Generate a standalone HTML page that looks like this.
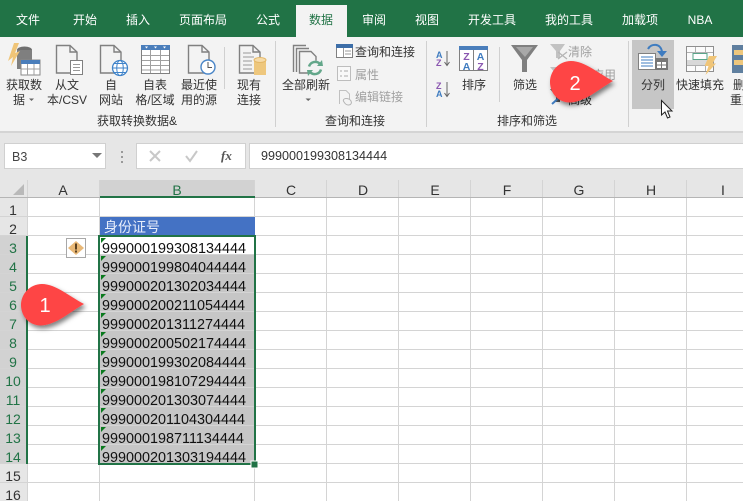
<!DOCTYPE html>
<html><head><meta charset="utf-8"><style>
html,body{margin:0;padding:0;width:743px;height:501px;overflow:hidden;background:#fff}
svg{display:block}
text{font-family:"Liberation Sans","Noto Sans CJK SC",sans-serif}
.t{font-size:12px;fill:#fff;text-anchor:middle}
.r{font-size:12px;fill:#333;text-anchor:middle}
.l{font-size:12px;fill:#333}
.d{font-size:12px;fill:#a0a0a0}
.c{font-size:14.4px;fill:#111}
.h{font-size:14px;fill:#333;text-anchor:middle}
.g{fill:none;stroke:#808080;stroke-width:1.4}
</style></head><body>
<svg width="743" height="501" viewBox="0 0 743 501" xmlns="http://www.w3.org/2000/svg">
<defs>
<filter id="sh" x="-30%" y="-30%" width="170%" height="170%"><feDropShadow dx="2" dy="3" stdDeviation="2.500" flood-color="#000" flood-opacity=".5"/></filter>
</defs>
<!-- tabs -->
<rect width="743" height="37" fill="#217346"/>
<rect x="296" y="5" width="51" height="32" fill="#f3f3f3"/>
<text class="t" x="28" y="24">文件</text><text class="t" x="85" y="24">开始</text><text class="t" x="138" y="24">插入</text><text class="t" x="203" y="24">页面布局</text><text class="t" x="268" y="24">公式</text>
<text class="t" x="321" y="24" style="fill:#217346">数据</text>
<text class="t" x="374" y="24">审阅</text><text class="t" x="427" y="24">视图</text><text class="t" x="492" y="24">开发工具</text><text class="t" x="569" y="24">我的工具</text><text class="t" x="640" y="24">加载项</text><text class="t" x="700" y="24">NBA</text>
<!-- ribbon -->
<rect y="37" width="743" height="94" fill="#f3f3f3"/>
<rect y="131" width="743" height="2" fill="#d4d4d4"/>
<rect y="133" width="743" height="47" fill="#e6e6e6"/>
<g fill="#d0d0d0"><rect x="275" y="41" width="1" height="86"/><rect x="426" y="41" width="1" height="86"/><rect x="628" y="41" width="1" height="86"/><rect x="224" y="47" width="1" height="42"/><rect x="499" y="47" width="1" height="55"/></g>
<rect x="632" y="40" width="42" height="69" fill="#c6c6c6"/>

<!-- get data icon -->
<ellipse cx="24.500" cy="50" rx="7.500" ry="3.500" fill="#6f6f6f"/><rect x="17" y="50" width="15" height="19" fill="#7f7f7f"/>
<polygon points="14,43 8,61 13,57 11,66 20,51 15,53 19,43" fill="#f0c578"/>
<rect x="21" y="60" width="19" height="15" fill="#fff" stroke="#8a8a8a"/><rect x="21" y="60" width="19" height="4" fill="#4a7ebb"/>
<path d="M21.500 69H40M27.500 64V75M34 64V75" stroke="#a0a0a0" fill="none"/>
<!-- from text -->
<path class="g" d="M56.500 45.500H70L77 52V73H56.500Z"/><path class="g" d="M70 45.500V52H77"/>
<rect x="70.500" y="60.500" width="12" height="14" fill="#fff" stroke="#808080"/><path d="M73 64.500H80M73 67.500H80M73 70.500H80" stroke="#999"/>
<!-- web -->
<path class="g" d="M100.500 45.500H114L121 52V73H100.500Z"/><path class="g" d="M114 45.500V52H121"/>
<circle cx="120" cy="68" r="7.500" fill="#fff" stroke="#3f83c9" stroke-width="1.300"/><ellipse cx="120" cy="68" rx="3.300" ry="7.500" fill="none" stroke="#3f83c9"/><path d="M112.500 68H127.500M114 63.500H126M114 72.500H126" stroke="#3f83c9"/>
<!-- table -->
<rect x="141.500" y="45.500" width="28" height="28" fill="#fff" stroke="#808080"/><rect x="141" y="45" width="29" height="5" fill="#4a7ebb"/>
<path d="M145 46.500H148L146.500 48.500ZM154 46.500H157L155.500 48.500ZM163 46.500H166L164.500 48.500Z" fill="#fff"/>
<path d="M142 55.500H169M142 60.500H169M142 65.500H169M142 70H169M150.500 50V73M160.500 50V73" stroke="#a0a0a0" fill="none"/>
<!-- recent -->
<path class="g" d="M188.500 45.500H202L209 52V73H188.500Z"/><path class="g" d="M202 45.500V52H209"/>
<circle cx="208" cy="67" r="7" fill="#fff" stroke="#4a86c8" stroke-width="1.400"/><path d="M208 62V67.500H212" stroke="#555" fill="none"/>
<!-- existing -->
<path class="g" d="M239.500 45.500H253L260 52V73H239.500Z"/><path class="g" d="M253 45.500V52H260"/><path d="M243 53H251M243 57H254M243 61H252M243 65H252M243 69H252" stroke="#999"/>
<rect x="254" y="60" width="12" height="15" fill="#eec77d"/><ellipse cx="260" cy="60" rx="6" ry="2.500" fill="#f6dba8" stroke="#e3b767"/>
<!-- refresh all -->
<path class="g" d="M293.500 72V45.500H306M296.500 72V48.500H309"/><path class="g" d="M299.500 51.500H311L316 56.500V73H299.500Z" fill="#f3f3f3"/>
<circle cx="315" cy="68" r="7.500" fill="#f3f3f3"/><path d="M309 66.500A6.500 6.500 0 0 1 320 64M321 69.500A6.500 6.500 0 0 1 310 72" fill="none" stroke="#63a78a" stroke-width="2.500"/><polygon points="317,66 323,66 322,60" fill="#63a78a"/><polygon points="307,70 313,70 308,76" fill="#63a78a"/>
<!-- small -->
<rect x="336.500" y="44.500" width="16" height="13" fill="#fff" stroke="#808080"/><rect x="336" y="44" width="17" height="4" fill="#3d6ea8"/><path d="M343.500 48V57M345 51H351M345 54H351" stroke="#999" fill="none"/>
<rect x="337.500" y="66.500" width="13" height="14" fill="#f8f8f8" stroke="#bdbdbd"/><path d="M340 71H342M344 71H348M340 76H342M344 76H348" stroke="#aaa"/>
<path d="M339.500 104V90.500H346L349.500 94V99" fill="none" stroke="#c0c0c0"/><path d="M344 102C341 98 349 97 351 101C353 105 347 107 344 102Z" fill="none" stroke="#b5b5b5"/>
<text class="l" x="355" y="56">查询和连接</text><text class="d" x="355" y="79">属性</text><text class="d" x="355" y="101">编辑链接</text>
<!-- sort -->
<text x="436" y="58" style="font-size:9px;font-weight:bold;fill:#3f7cc0">A</text><text x="436" y="66" style="font-size:9px;font-weight:bold;fill:#8a56b0">Z</text><text x="436" y="89" style="font-size:9px;font-weight:bold;fill:#8a56b0">Z</text><text x="436" y="97" style="font-size:9px;font-weight:bold;fill:#3f7cc0">A</text>
<path d="M447 51V65M444.500 62L447 65.500L449.500 62M447 82V96M444.500 93L447 96.500L449.500 93" fill="none" stroke="#666"/>
<rect x="459.500" y="46.500" width="28" height="24" fill="#fff" stroke="#808080"/><rect x="459" y="46" width="29" height="4" fill="#4a7ebb"/><path d="M473.500 50V71" stroke="#808080"/>
<text x="466.500" y="60" style="font-size:10.500px;font-weight:bold;fill:#8a56b0;text-anchor:middle">Z</text><text x="466.500" y="70" style="font-size:10.500px;font-weight:bold;fill:#3f7cc0;text-anchor:middle">A</text><text x="480.500" y="60" style="font-size:10.500px;font-weight:bold;fill:#3f7cc0;text-anchor:middle">A</text><text x="480.500" y="70" style="font-size:10.500px;font-weight:bold;fill:#8a56b0;text-anchor:middle">Z</text>
<text class="r" x="474" y="89">排序</text>
<polygon points="511,45 538,45 527,60 527,72 522,72 522,60" fill="#7f7f7f"/><polygon points="516,47 533,47 525,57" fill="#a8a8a8"/>
<text class="r" x="525" y="89">筛选</text>
<polygon points="550,44 565,44 560,51 560,58 556,58 556,51" fill="#c2c2c2"/><path d="M558 52L567 59M567 52L558 59" stroke="#b5b5b5" stroke-width="1.300"/>
<text class="d" x="568" y="56">清除</text><text class="d" x="568" y="79">重新应用</text>
<polygon points="550,67 565,67 560,74 560,80 556,80 556,74" fill="#c2c2c2"/>
<polygon points="550,89 565,89 560,96 560,102 556,102 556,96" fill="#555"/><path d="M552 104L562 95" stroke="#3f7cc0" stroke-width="2"/>
<text class="l" x="568" y="104">高级</text>
<!-- text to columns -->
<rect x="638.500" y="53.500" width="17" height="16" fill="#fff" stroke="#808080"/><path d="M641 57H653M641 60H653M641 63H653M641 66H653" stroke="#3f7cc0"/>
<rect x="655" y="58" width="13" height="12" fill="#777"/><rect x="657" y="62" width="4" height="2.500" fill="#fff"/><rect x="662" y="62" width="4" height="2.500" fill="#fff"/><rect x="657" y="65.500" width="4" height="2.500" fill="#fff"/><rect x="662" y="65.500" width="4" height="2.500" fill="#fff"/>
<path d="M648 49C651 43 661 43 662 52" fill="none" stroke="#3f7cc0" stroke-width="2"/><polygon points="657,51 667,51 662,57" fill="#3f7cc0"/>
<text class="r" x="653" y="89">分列</text>
<!-- flash fill -->
<rect x="686.500" y="46.500" width="27" height="25" fill="#fbfbfb" stroke="#8f8f8f"/><path d="M687 52.500H713M687 65.500H713M695.500 47V71M705.500 47V71" stroke="#b0b0b0"/><rect x="693" y="53.500" width="14" height="6" fill="#fff" stroke="#5aa58a"/><rect x="687" y="60" width="26" height="5" fill="#d8d8d8"/>
<path d="M709 56H717L712.500 63.500H716L705.500 75L708.500 66H704.500Z" fill="#f0c578"/>
<text class="r" x="700" y="89">快速填充</text>
<rect x="732" y="45" width="11" height="28" fill="#5f7f9f"/><rect x="734" y="50" width="9" height="5" fill="#eec77d"/><rect x="734" y="60" width="9" height="5" fill="#eec77d"/>
<text class="l" x="733" y="89">删除</text><text class="l" x="730" y="104">重复</text>
<!-- ribbon labels -->
<text class="r" x="24" y="89">获取数</text><text class="r" x="19" y="104">据</text><path d="M29 98.500H34L31.500 101Z" fill="#666"/>
<text class="r" x="67" y="89">从文</text><text class="r" x="67" y="104">本/CSV</text>
<text class="r" x="111" y="89">自</text><text class="r" x="111" y="104">网站</text>
<text class="r" x="155" y="89">自表</text><text class="r" x="155" y="104">格/区域</text>
<text class="r" x="199" y="89">最近使</text><text class="r" x="199" y="104">用的源</text>
<text class="r" x="249" y="89">现有</text><text class="r" x="249" y="104">连接</text>
<text class="r" x="306" y="89">全部刷新</text><path d="M305.500 98.500H311L308.200 101Z" fill="#666"/>
<text class="r" x="137" y="125">获取转换数据&amp;</text><text class="r" x="355" y="125">查询和连接</text><text class="r" x="527" y="125">排序和筛选</text>
<!-- formula bar -->
<rect x="4.500" y="143.500" width="101" height="25" fill="#fff" stroke="#d0d0d0"/>
<text x="12" y="161" style="font-size:12.500px;fill:#444">B3</text><path d="M92 153H102L97 158Z" fill="#777"/>
<path d="M121 152H123M121 157H123M121 162H123" stroke="#999" stroke-width="2"/>
<rect x="136.500" y="143.500" width="109" height="25" fill="#fff" stroke="#d0d0d0"/>
<path d="M150 151L160 161M160 151L150 161" stroke="#c8c8c8" stroke-width="2"/><path d="M186 156L190 161L197 151" fill="none" stroke="#c8c8c8" stroke-width="2"/>
<text x="221" y="160" style="font-family:'Liberation Serif',serif;font-size:13px;font-style:italic;font-weight:bold;fill:#555">fx</text>
<rect x="249.500" y="143.500" width="494" height="25" fill="#fff" stroke="#d0d0d0"/>
<text x="261" y="160" style="font-size:12.600px;fill:#333">999000199308134444</text>
<!-- grid -->
<rect y="180" width="743" height="321" fill="#fff"/>
<rect y="180" width="743" height="18" fill="#e6e6e6"/>
<rect x="0" y="198" width="27" height="303" fill="#e6e6e6"/>
<rect x="100" y="180" width="155" height="17" fill="#d2d2d2"/>
<rect x="0" y="236" width="27" height="228" fill="#d2d2d2"/>
<polygon points="24,184 24,195 13,195" fill="#b9b9b9"/>
<g stroke="#d4d4d4" fill="none">
<path d="M27.500 180V501M99.500 180V501M254.500 180V501M326.500 180V501M398.500 180V501M470.500 180V501M542.500 180V501M614.500 180V501M686.500 180V501"/>
<path d="M0 216.500H743M0 235.500H743M0 254.500H743M0 273.500H743M0 292.500H743M0 311.500H743M0 330.500H743M0 349.500H743M0 368.500H743M0 387.500H743M0 406.500H743M0 425.500H743M0 444.500H743M0 463.500H743M0 482.500H743"/>
</g>
<rect x="0" y="197" width="743" height="1" fill="#b5b5b5"/>
<text class="h" x="63" y="195">A</text><text class="h" x="177" y="195" style="fill:#217346">B</text><text class="h" x="291" y="195">C</text><text class="h" x="363" y="195">D</text><text class="h" x="435" y="195">E</text><text class="h" x="507" y="195">F</text><text class="h" x="579" y="195">G</text><text class="h" x="651" y="195">H</text><text class="h" x="723" y="195">I</text>
<rect x="100" y="196" width="155" height="2" fill="#217346"/>
<rect x="26" y="236" width="2" height="228" fill="#217346"/>
<text class="h" x="13" y="215">1</text><text class="h" x="13" y="234">2</text>
<text class="h" x="13" y="253" style="fill:#217346">3</text><text class="h" x="13" y="272" style="fill:#217346">4</text><text class="h" x="13" y="291" style="fill:#217346">5</text><text class="h" x="13" y="310" style="fill:#217346">6</text><text class="h" x="13" y="329" style="fill:#217346">7</text><text class="h" x="13" y="348" style="fill:#217346">8</text><text class="h" x="13" y="367" style="fill:#217346">9</text><text class="h" x="13" y="386" style="fill:#217346">10</text><text class="h" x="13" y="405" style="fill:#217346">11</text><text class="h" x="13" y="424" style="fill:#217346">12</text><text class="h" x="13" y="443" style="fill:#217346">13</text><text class="h" x="13" y="462" style="fill:#217346">14</text>
<text class="h" x="13" y="481">15</text><text class="h" x="13" y="500">16</text>
<!-- cells -->
<rect x="100" y="217" width="155" height="19" fill="#4472c4"/>
<text x="104" y="232" style="font-size:14px;fill:#e8eefb">身份证号</text>
<rect x="100" y="255" width="155" height="209" fill="#c6c6c6"/>
<path d="M100 273.500H254M100 292.500H254M100 311.500H254M100 330.500H254M100 349.500H254M100 368.500H254M100 387.500H254M100 406.500H254M100 425.500H254M100 444.500H254" stroke="#d4d4d4"/>
<g fill="#0b7a1e">
<polygon points="101,238 106,238 101,243"/><polygon points="101,256 106,256 101,261"/><polygon points="101,275 106,275 101,280"/><polygon points="101,294 106,294 101,299"/><polygon points="101,313 106,313 101,318"/><polygon points="101,332 106,332 101,337"/><polygon points="101,351 106,351 101,356"/><polygon points="101,370 106,370 101,375"/><polygon points="101,389 106,389 101,394"/><polygon points="101,408 106,408 101,413"/><polygon points="101,427 106,427 101,432"/><polygon points="101,446 106,446 101,451"/>
</g>
<text class="c" x="102" y="253">999000199308134444</text>
<text class="c" x="102" y="272">999000199804044444</text>
<text class="c" x="102" y="291">999000201302034444</text>
<text class="c" x="102" y="310">999000200211054444</text>
<text class="c" x="102" y="329">999000201311274444</text>
<text class="c" x="102" y="348">999000200502174444</text>
<text class="c" x="102" y="367">999000199302084444</text>
<text class="c" x="102" y="386">999000198107294444</text>
<text class="c" x="102" y="405">999000201303074444</text>
<text class="c" x="102" y="424">999000201104304444</text>
<text class="c" x="102" y="443">999000198711134444</text>
<text class="c" x="102" y="462">999000201303194444</text>
<rect x="99" y="236" width="156" height="228" fill="none" stroke="#217346" stroke-width="2"/>
<rect x="251" y="461" width="7" height="7" fill="#217346" stroke="#fff"/>
<!-- warning -->
<rect x="66.500" y="238.500" width="19" height="19" fill="#fff" stroke="#a8a8a8"/>
<polygon points="76,241 84,248 76,255 68,248" fill="#e8b877"/>
<rect x="75" y="243.500" width="2" height="6" fill="#5a4020"/><rect x="75" y="250.500" width="2" height="2" fill="#5a4020"/>
<!-- callouts -->
<path transform="translate(42 305)" d="M0-21C14-21 28-8 42-1C28 7 14 20-1 20.500C-13 20.500-21 11-21 0C-21-11-12-21 0-21Z" fill="#fe4444" filter="url(#sh)"/>
<text x="45" y="312" style="font-size:20px;fill:#fff;text-anchor:middle">1</text>
<path transform="translate(571 82)" d="M0-21C14-21 28-8 42-1C28 7 14 20-1 20.500C-13 20.500-21 11-21 0C-21-11-12-21 0-21Z" fill="#fe4444" filter="url(#sh)"/>
<text x="575" y="90" style="font-size:20px;fill:#fff;text-anchor:middle">2</text>
<!-- cursor -->
<polygon points="661.500,100.500 661.500,115 665,112 667.500,118 670,117 667.500,111 672,111" fill="#fff" stroke="#222"/>
</svg>
</body></html>
